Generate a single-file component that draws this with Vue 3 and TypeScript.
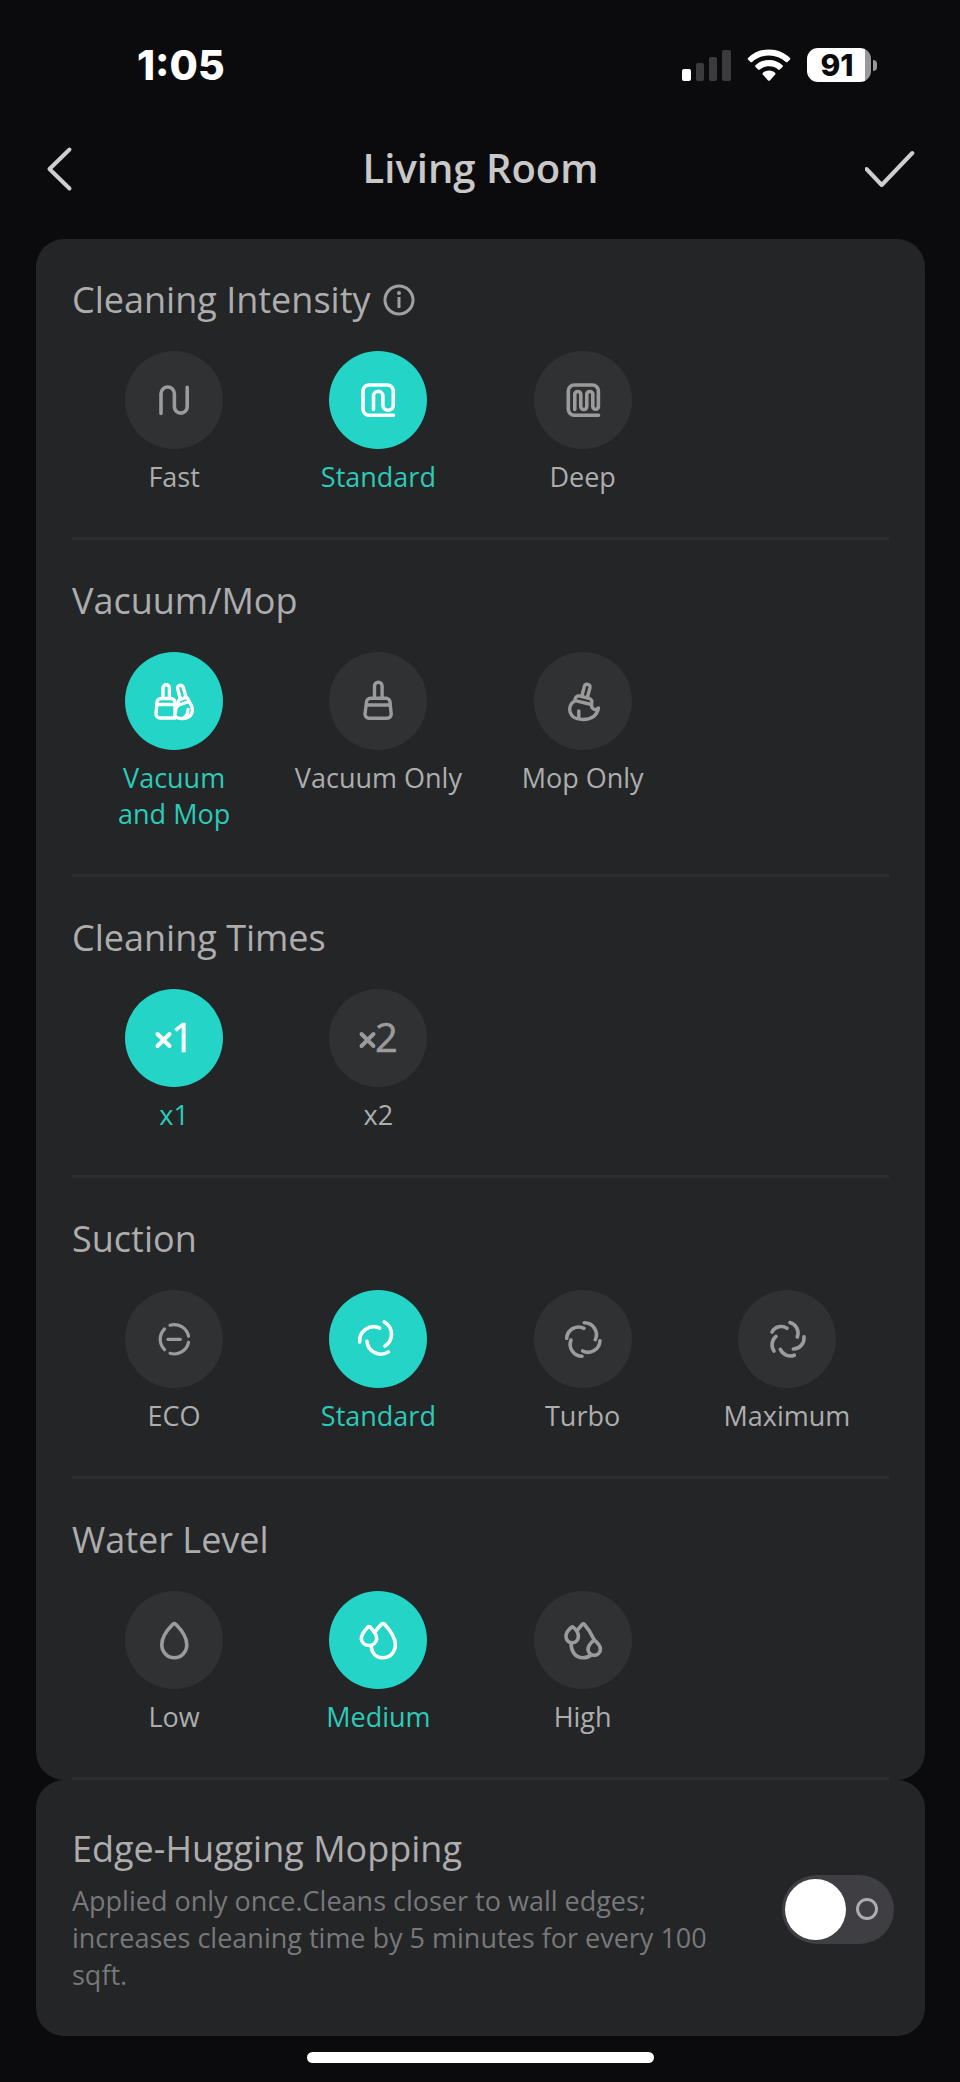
<script setup lang="ts">
import { reactive, ref } from 'vue'

interface Option {
  id: string
  label: string
  paths?: string[]
  digit?: string
  weight?: number
}

interface Group {
  id: string
  title: string
  info?: boolean
  options: Option[]
}

const groups: Group[] = [
  {
    id: 'intensity',
    title: 'Cleaning Intensity',
    info: true,
    options: [
      { id: 'fast', label: 'Fast', paths: ['M36 62.5V42.7a6.7 6.7 0 0 1 13.4 0V55.7a6.4 6.4 0 0 0 12.8 0V36.3'] },
      {
        id: 'standard',
        label: 'Standard',
        paths: ['M44.5 58.5V45a4.7 4.7 0 0 1 9.4 0V54a5.2 5.2 0 0 0 10.4 0V40a6 6 0 0 0-6-6H40a6 6 0 0 0-6 6V58.3a6 6 0 0 0 6 6H64.5'],
      },
      {
        id: 'deep',
        label: 'Deep',
        paths: ['M40.8 58.5V43.5a3 3 0 0 1 6 0V55.5a3 3 0 0 0 6 0V43.5a3 3 0 0 1 6 0V55.5a2.8 2.8 0 0 0 5.6 0V40a6 6 0 0 0-6-6H40.3a6 6 0 0 0-6 6V58.3a6 6 0 0 0 6 6H64.5'],
      },
    ],
  },
  {
    id: 'mode',
    title: 'Vacuum/Mop',
    options: [
      {
        id: 'both',
        label: 'Vacuum\nand Mop',
        weight: 3.4,
        paths: [
          'M38 46.5V36a3.2 3.2 0 0 1 6.4 0V46.5',
          'M36 46.5H46a4 4 0 0 1 4 4V66H35a4 4 0 0 1-4-4l1-11.5a4 4 0 0 1 4-4Z',
          'M32 52.5H50',
          'M55.3 46.5L52.6 36.8a2.9 2.9 0 0 1 5.6-1.5L61 45',
          'M52.5 52.5L54 48L61.5 45.2Q63 46 64 49.5',
          'M54 53L64 49.5C66.5 53 68 56 67.2 60C66 65.5 60 67 56 66.5Q52.5 66.5 50 64.5',
          'M50.5 60C50.5 56 52 54 54 53',
          'M63 57.5C63 61 61.5 64.5 58.5 66',
        ],
      },
      {
        id: 'vacuum',
        label: 'Vacuum Only',
        weight: 3.4,
        paths: [
          'M45.5 46V34a3.8 3.8 0 0 1 7.6 0V46',
          'M41.5 46.2H57a4 4 0 0 1 4 4L62.2 62a4 4 0 0 1-4 4.2H40a4 4 0 0 1-4-4.2L37.5 50.2a4 4 0 0 1 4-4Z',
          'M37.5 53H61',
        ],
      },
      {
        id: 'mop',
        label: 'Mop Only',
        weight: 3.4,
        paths: [
          'M47.8 44.3L50.4 34.2a2.9 2.9 0 0 1 5.6 1.4L53.3 45.7',
          'M41 48.7C41 45.2 43 43.3 46 44L55 46.3C57.8 47 58.6 49.5 57.5 52.5Z',
          'M41 48.7C36.5 51 34.5 56 36.2 60.5C38.2 66 43.5 67.5 49 67.5C57.5 67.5 63 63.5 64.5 56C61.5 59 57.5 57.5 57.5 52.5',
          'M44.8 59V65.5',
        ],
      },
    ],
  },
  {
    id: 'times',
    title: 'Cleaning Times',
    options: [
      { id: 'one', label: 'x1', digit: '1' },
      { id: 'two', label: 'x2', digit: '2' },
    ],
  },
  {
    id: 'suction',
    title: 'Suction',
    options: [
      {
        id: 'eco',
        label: 'ECO',
        weight: 3.2,
        paths: [
          'M39.5 39A14.5 14.5 0 0 0 39.5 59.6',
          'M45 35.3A14.5 14.5 0 0 1 63.5 46.2',
          'M45 63.3A14.5 14.5 0 0 0 63.5 52.4',
          'M43 49.3H55.3',
        ],
      },
      {
        id: 'standard',
        label: 'Standard',
        paths: ['M30.7 52A14 14 0 0 1 50.7 38.2', 'M55.3 32A14 14 0 0 1 56 56', 'M59.3 62A14 14 0 0 1 38 51.3'],
      },
      {
        id: 'turbo',
        label: 'Turbo',
        paths: [
          'M32.7 48.3A12 12 0 0 1 50 38.3',
          'M50.3 32.7A12 12 0 0 1 61.3 49.7',
          'M66 50.7A12 12 0 0 1 48.7 61',
          'M48 66.3A12 12 0 0 1 37 50',
        ],
      },
      {
        id: 'maximum',
        label: 'Maximum',
        paths: [
          'M34 42A10.5 10.5 0 0 1 49 38.3',
          'M52 32.5A11 11 0 0 1 59.3 47',
          'M66 46.7A11 11 0 0 1 55.3 59',
          'M56.3 65.2A11 11 0 0 1 42.3 59.3',
          'M36 61A11 11 0 0 1 38 46.3',
        ],
      },
    ],
  },
  {
    id: 'water',
    title: 'Water Level',
    options: [
      {
        id: 'low',
        label: 'Low',
        paths: ['M47.8 33.3Q49.3 32 50.8 33.3C55 37.5 61.8 46 61.8 53.8A12.5 13 0 0 1 36.8 53.8C36.8 46 43.6 37.5 47.8 33.3Z'],
      },
      {
        id: 'medium',
        label: 'Medium',
        paths: [
          'M39 36Q40 35.2 41 36C44 39 47.7 43.5 47.7 48A7.8 7.8 0 0 1 32.3 48C32.3 43.5 36 39 39 36Z',
          'M46 41C48 38 50.5 35.2 52.7 33Q54 32 55.3 33C59.5 37.5 66.4 46 66.4 53.8A12.5 13 0 0 1 54 66.8C47 66.8 43 62 42.3 56',
        ],
      },
      {
        id: 'high',
        label: 'High',
        paths: [
          'M37.5 36.2Q38.3 35.4 39.1 36.2C42 38.5 44.4 42 44.4 45.6A6.2 6.2 0 0 1 32 45.6C32 42 34.5 38.5 37.5 36.2Z',
          'M43 39.5L48.3 33.3Q49.3 32.3 50.3 33.3C54 37.5 57.5 43 60.2 48.8',
          'M60.2 48.8C63.5 51.5 66.4 55 66.4 58.2A6.2 6.2 0 0 1 54 58.2C54 55 57 51.5 60.2 48.8Z',
          'M37 52C37 60 41 66.8 49 66.8Q53.5 66.8 57 64',
        ],
      },
    ],
  },
]

const selected = reactive<Record<string, string>>({
  intensity: 'standard',
  mode: 'both',
  times: 'one',
  suction: 'standard',
  water: 'medium',
})

const edgeHugging = ref(false)
</script>

<template>
  <div class="screen">
    <div class="status">
      <span class="clock">1:05</span>
      <div class="indicators">
        <svg class="signal" viewBox="0 0 50 34" aria-hidden="true">
          <rect x="1" y="21" width="9" height="12" rx="2" fill="#fff" />
          <rect x="15" y="15" width="8" height="18" rx="2" fill="#3b3b3d" />
          <rect x="28" y="9" width="8" height="24" rx="2" fill="#3b3b3d" />
          <rect x="41" y="2" width="9" height="31" rx="2" fill="#3b3b3d" />
        </svg>
        <svg class="wifi" viewBox="0 0 44 34" aria-hidden="true">
          <path d="M22 1.4C30.400 1.400 37.600 4.600 43 9.900Q43.700 10.700 43 11.500L40.500 14Q39.700 14.700 38.900 14C34.300 9.800 28.600 7.600 22 7.600S9.700 9.800 5.100 14Q4.300 14.700 3.500 14L1 11.500Q.3 10.700 1 9.900C6.400 4.600 13.600 1.400 22 1.400Z" />
          <path d="M22 12C27.500 12 32 14 35.500 17.300Q36.300 18.100 35.500 18.900L32.800 21.600Q32 22.300 31.200 21.600C28.600 19.400 25.600 18.300 22 18.300S15.400 19.400 12.800 21.600Q12 22.300 11.200 21.600L8.500 18.900Q7.700 18.100 8.500 17.300C12 14 16.500 12 22 12Z" />
          <path d="M22 22.600C24.500 22.600 26.600 23.500 28.200 24.900Q29 25.700 28.200 26.500L22.900 32.400Q22 33.300 21.100 32.400L15.800 26.500Q15 25.700 15.800 24.900C17.400 23.500 19.500 22.600 22 22.600Z" />
        </svg>
        <div class="battery">
          <span class="level">91</span>
          <span class="tip"></span>
        </div>
      </div>
    </div>

    <header class="bar">
      <button type="button" class="nav" aria-label="Back">
        <svg viewBox="0 0 54 54"><path d="M27.500 7.500L7.500 27L27.500 46.500" /></svg>
      </button>
      <h1>Living Room</h1>
      <button type="button" class="nav" aria-label="Save">
        <svg viewBox="0 0 54 54"><path d="M1.500 27L16.700 43L47.300 11" /></svg>
      </button>
    </header>

    <main>
      <div class="card">
        <section v-for="group in groups" :key="group.id" class="group" role="radiogroup" :aria-labelledby="group.id">
          <div class="heading">
            <h2 :id="group.id">{{ group.title }}</h2>
            <button v-if="group.info" type="button" class="info" aria-label="About cleaning intensity">
              <svg viewBox="0 0 32 32">
                <circle cx="16" cy="16" r="14" />
                <path d="M16 13V24" />
                <circle class="dot" cx="16" cy="9" r="2" />
              </svg>
            </button>
          </div>
          <div class="options">
            <label v-for="option in group.options" :key="option.id" class="option">
              <input v-model="selected[group.id]" type="radio" :name="group.id" :value="option.id" />
              <svg class="disc" viewBox="0 0 98 98" aria-hidden="true">
                <template v-if="option.digit">
                  <path class="cross" d="M32.500 45L44.500 57M44.500 45L32.500 57" />
                  <text x="46" y="63">{{ option.digit }}</text>
                </template>
                <path v-for="d in option.paths" :key="d" :d="d" :stroke-width="option.weight ?? 3.6" />
              </svg>
              <span class="name">{{ option.label }}</span>
            </label>
          </div>
        </section>
      </div>

      <div class="card edge">
        <div class="copy">
          <h2 id="edge-title">Edge-Hugging Mopping</h2>
          <p id="edge-note">Applied only once.Cleans closer to wall edges; increases cleaning time by 5 minutes for every 100 sqft.</p>
        </div>
        <input
          v-model="edgeHugging"
          class="switch"
          type="checkbox"
          role="switch"
          aria-labelledby="edge-title"
          aria-describedby="edge-note"
        />
      </div>
    </main>

    <div class="home"></div>
  </div>
</template>

<style>
body {
  margin: 0;
  background: #0b0b0d;
}
</style>

<style scoped>
.screen {
  box-sizing: border-box;
  min-height: 100vh;
  padding: 0 35px 0 36px;
  background: #0b0b0d;
  color: #adadae;
  font-family: "Open Sans", "Noto Sans", sans-serif;
}

.status {
  display: flex;
  align-items: center;
  justify-content: space-between;
  height: 130px;
  padding: 0 48px 0 101px;
}

.clock {
  color: #fff;
  font: 800 41px/48px Inter, sans-serif;
}

.indicators {
  display: flex;
  align-items: center;
  gap: 16px;
}

.signal {
  width: 50px;
  height: 34px;
}

.wifi {
  width: 44px;
  height: 34px;
  fill: #fff;
}

.battery {
  display: flex;
  align-items: center;
  gap: 2px;
}

.level {
  box-sizing: border-box;
  width: 64px;
  height: 34px;
  padding-right: 4px;
  border-radius: 11px;
  background: linear-gradient(90deg, #fff 58px, #98989a 58px);
  color: #0b0b0d;
  font: 800 30px/34px Inter, sans-serif;
  text-align: center;
}

.tip {
  width: 4px;
  height: 11px;
  border-radius: 0 5px 5px 0;
  background: #98989a;
}

.bar {
  display: flex;
  align-items: center;
  justify-content: space-between;
  height: 78px;
  padding: 0 6px;
  margin-bottom: 31px;
}

h1 {
  margin: 0;
  padding-bottom: 2px;
  color: #c8c8c9;
  font-size: 40px;
  font-weight: 600;
  line-height: 54px;
}

button {
  padding: 0;
  border: 0;
  background: none;
  color: inherit;
  cursor: pointer;
}

.nav,
.nav svg {
  display: block;
  width: 54px;
  height: 54px;
}

.nav path {
  fill: none;
  stroke: #cecece;
  stroke-width: 4;
  stroke-linecap: round;
  stroke-linejoin: round;
}

.card {
  border-radius: 28px;
  background: #242527;
}

.group {
  margin: 0 36px;
  padding: 37px 0 42px;
  border-bottom: 3px solid #2d2e30;
}

.heading {
  display: flex;
  align-items: center;
  gap: 12px;
  margin-bottom: 27px;
}

h2 {
  margin: 0;
  font-size: 36px;
  font-weight: 400;
  line-height: 48px;
}

.info,
.info svg {
  display: block;
  width: 32px;
  height: 32px;
}

.info svg {
  fill: none;
  stroke: #a0a0a1;
  stroke-width: 3;
}

.info .dot {
  fill: #a0a0a1;
  stroke: none;
}

.options {
  display: grid;
  grid-template-columns: repeat(4, 1fr);
}

.option {
  position: relative;
  display: flex;
  flex-direction: column;
  align-items: center;
  gap: 10px;
  cursor: pointer;
}

.option input {
  position: absolute;
  width: 98px;
  height: 98px;
  margin: 0;
  opacity: 0;
}

.disc {
  width: 98px;
  height: 98px;
  border-radius: 50%;
  background: #303133;
  color: #9b9b9c;
}

.disc path {
  fill: none;
  stroke: currentColor;
  stroke-linecap: round;
  stroke-linejoin: round;
}

.disc .cross {
  stroke-width: 4;
}

.disc text {
  fill: currentColor;
  font-size: 40px;
  font-weight: 500;
  stroke: currentColor;
  stroke-width: 0.5;
}

.name {
  font-size: 27px;
  line-height: 36px;
  text-align: center;
  white-space: pre-line;
}

.option input:checked + .disc {
  background: #23d4c7;
  color: #fff;
}

.option input:checked ~ .name {
  color: #2bcbb9;
}

.edge {
  display: flex;
  align-items: center;
  justify-content: space-between;
  gap: 64px;
  padding: 45px 31px 43px 36px;
}

.copy {
  flex: 1;
}

p {
  margin: 9px 0 0;
  color: #77787a;
  font-size: 27px;
  line-height: 37px;
}

.switch {
  display: flex;
  align-items: center;
  justify-content: space-between;
  box-sizing: border-box;
  width: 112px;
  height: 69px;
  margin: 0;
  padding: 0 16px 0 3px;
  border-radius: 35px;
  background: #3f3e43;
  appearance: none;
  cursor: pointer;
}

.switch::before {
  width: 61px;
  height: 61px;
  border-radius: 50%;
  background: #fff;
  content: "";
}

.switch::after {
  box-sizing: border-box;
  width: 22px;
  height: 22px;
  border: 3px solid #adadb0;
  border-radius: 50%;
  content: "";
}

.switch:checked {
  flex-direction: row-reverse;
  padding: 0 3px 0 16px;
  background: #23d4c7;
}

.home {
  width: 39%;
  height: 11px;
  margin: 16px auto 0;
  border-radius: 6px;
  background: #fff;
}
</style>
